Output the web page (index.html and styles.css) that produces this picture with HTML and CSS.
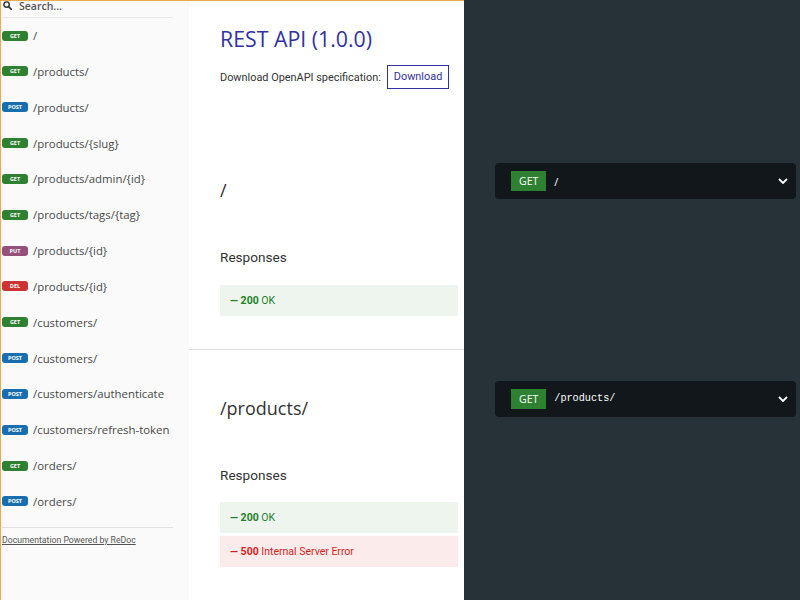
FILE: index.html
```html
<!DOCTYPE html>
<html lang="en">
<head>
<meta charset="utf-8">
<title>REST API (1.0.0)</title>
<link rel="stylesheet" href="styles.css">
</head>
<body>
<div class="page">
  <nav class="sidebar">
    <div class="search">
      <svg class="search-icon" width="9" height="9" viewBox="0 0 10 10"><circle cx="4" cy="4" r="3" fill="none" stroke="#333" stroke-width="1.6"/><path d="M6.2 6.2 L9.3 9.3" stroke="#333" stroke-width="1.8" stroke-linecap="round"/></svg>
      <span class="search-text">Search...</span>
    </div>
    <ul class="menu">
      <li class="item"><span class="verb get">get</span><span class="label">/</span></li>
      <li class="item"><span class="verb get">get</span><span class="label">/products/</span></li>
      <li class="item"><span class="verb post">post</span><span class="label">/products/</span></li>
      <li class="item"><span class="verb get">get</span><span class="label">/products/{slug}</span></li>
      <li class="item"><span class="verb get">get</span><span class="label">/products/admin/{id}</span></li>
      <li class="item"><span class="verb get">get</span><span class="label">/products/tags/{tag}</span></li>
      <li class="item"><span class="verb put">put</span><span class="label">/products/{id}</span></li>
      <li class="item"><span class="verb del">del</span><span class="label">/products/{id}</span></li>
      <li class="item"><span class="verb get">get</span><span class="label">/customers/</span></li>
      <li class="item"><span class="verb post">post</span><span class="label">/customers/</span></li>
      <li class="item"><span class="verb post">post</span><span class="label">/customers/authenticate</span></li>
      <li class="item"><span class="verb post">post</span><span class="label">/customers/refresh-token</span></li>
      <li class="item"><span class="verb get">get</span><span class="label">/orders/</span></li>
      <li class="item"><span class="verb post">post</span><span class="label">/orders/</span></li>
    </ul>
    <div class="powered"><a href="#">Documentation Powered by ReDoc</a></div>
  </nav>

  <main class="content">
    <section class="row">
      <div class="middle info">
        <h1 class="title">REST API (1.0.0)</h1>
        <div class="download">
          <span>Download OpenAPI specification:</span>
          <a class="download-btn" href="#">Download</a>
        </div>
      </div>
      <div class="right"></div>
    </section>

    <section class="row">
      <div class="middle op">
        <h2 class="op-title">/</h2>
        <h3 class="resp-head">Responses</h3>
        <div class="resp ok"><strong>— 200</strong> OK</div>
      </div>
      <div class="right">
        <div class="endpoint">
          <span class="http-verb">GET</span>
          <span class="path">/</span>
          <svg class="chev" width="10" height="6" viewBox="0 0 10 6"><path d="M1 1 L5 5 L9 1" fill="none" stroke="#fff" stroke-width="1.8"/></svg>
        </div>
      </div>
    </section>

    <section class="row last-row">
      <div class="middle op last">
        <h2 class="op-title">/products/</h2>
        <h3 class="resp-head">Responses</h3>
        <div class="resp ok"><strong>— 200</strong> OK</div>
        <div class="resp err"><strong>— 500</strong> Internal Server Error</div>
      </div>
      <div class="right">
        <div class="endpoint">
          <span class="http-verb">GET</span>
          <span class="path mono">/products/</span>
          <svg class="chev" width="10" height="6" viewBox="0 0 10 6"><path d="M1 1 L5 5 L9 1" fill="none" stroke="#fff" stroke-width="1.8"/></svg>
        </div>
      </div>
    </section>
  </main>
</div>
</body>
</html>
```
FILE: styles.css
```css
* { box-sizing: border-box; }
html, body { margin: 0; padding: 0; }
body {
  width: 800px;
  height: 600px;
  overflow: hidden;
  font-family: Roboto, "Liberation Sans", sans-serif;
  color: #333;
}
.page {
  display: flex;
  height: 600px;
  overflow: hidden;
}

/* Sidebar */
.sidebar {
  width: 189px;
  flex: none;
  background: #fafafa;
  border-left: 1px solid #eaa84f;
  border-top: 1px solid #eaa84f;
  padding-left: 1px;
  display: flex;
  flex-direction: column;
}
.search {
  height: 16.6px;
  width: 171px;
  border-bottom: 1px solid #e8e8e8;
  display: flex;
  align-items: flex-start;
  gap: 7px;
  padding-left: 1px;
}
.search-icon { flex: none; }
.search-text {
  font-family: "Open Sans", sans-serif;
  font-weight: 600;
  font-size: 10.5px;
  line-height: 10px;
  color: #555;
}
.menu {
  list-style: none;
  margin: 0;
  padding: 0;
}
.item {
  height: 35.85px;
  display: flex;
  align-items: center;
  gap: 5px;
}
.verb {
  width: 26px;
  height: 10px;
  border-radius: 3px;
  color: #fff;
  font-family: "Open Sans", sans-serif;
  font-weight: 700;
  font-size: 5.5px;
  line-height: 10px;
  text-align: center;
  text-transform: uppercase;
  flex: none;
}
.get { background: #2f8132; }
.post { background: #186faf; }
.put { background: #95507c; }
.del { background: #cc3333; }
.label {
  font-family: "Open Sans", sans-serif;
  font-size: 11.4px;
  color: #484848;
  white-space: nowrap;
}
.powered {
  margin-top: 7.5px;
  width: 171px;
  border-top: 1px solid #e1e1e1;
  padding-top: 6px;
  font-size: 8.7px;
  line-height: 12px;
}
.powered a {
  font-family: Roboto, sans-serif;
  color: #555;
  text-decoration: underline;
}

/* Content */
.content {
  flex: 1;
  background: #263238;
  display: flex;
  flex-direction: column;
}
.row {
  display: grid;
  grid-template-columns: 275px 1fr;
}
.last-row { flex: 1; }
.middle {
  background: #fff;
  padding: 0 6px 0 31px;
}
.right {
  padding: 31px 4px 0 31px;
}
.info {
  border-top: 1px solid #eaa84f;
  padding-top: 25px;
  padding-bottom: 43px;
}
.title {
  margin: 0;
  font-family: "Open Sans", sans-serif;
  font-weight: 400;
  font-size: 21.3px;
  line-height: 26px;
  color: #32329f;
}
.download {
  margin-top: 13px;
  display: flex;
  align-items: center;
  gap: 6px;
  font-size: 10.9px;
  color: #333;
}
.download-btn {
  height: 24px;
  line-height: 22px;
  padding: 0 6px;
  border: 1px solid #32329f;
  color: #32329f;
  text-decoration: none;
  font-size: 10.9px;
}
.op {
  padding-top: 46px;
  padding-bottom: 33px;
  border-bottom: 1px solid #e1e1e1;
}
.op.last {
  border-bottom: none;
  padding-bottom: 20px;
}
.op-title {
  margin: 0;
  font-family: "Open Sans", sans-serif;
  font-weight: 400;
  font-size: 18px;
  line-height: 24px;
  color: #333;
}
.resp-head {
  margin: 45px 0 17.5px;
  font-weight: 400;
  font-size: 13.6px;
  line-height: 20px;
  color: #333;
}
.resp {
  height: 31px;
  line-height: 31px;
  padding-left: 10px;
  font-size: 10.5px;
}
.resp + .resp { margin-top: 3px; }
.resp strong { font-weight: 700; }
.ok { background: #eef5ef; color: #1d8127; }
.err { background: #fcebeb; color: #d41f1c; }

.endpoint {
  height: 36px;
  background: #11171a;
  border-radius: 4px;
  display: flex;
  align-items: center;
  padding: 0 8px 0 16px;
  gap: 8px;
}
.http-verb {
  height: 20px;
  line-height: 20px;
  padding: 0 8px;
  background: #2f8132;
  color: #fff;
  font-family: "Open Sans", sans-serif;
  font-size: 10.5px;
}
.path {
  flex: 1;
  color: #fff;
  font-family: "Open Sans", sans-serif;
  font-size: 11px;
}
.path.mono {
  font-family: "Liberation Mono", monospace;
  font-size: 10.2px;
  font-weight: 400;
}
.chev { flex: none; }
```
